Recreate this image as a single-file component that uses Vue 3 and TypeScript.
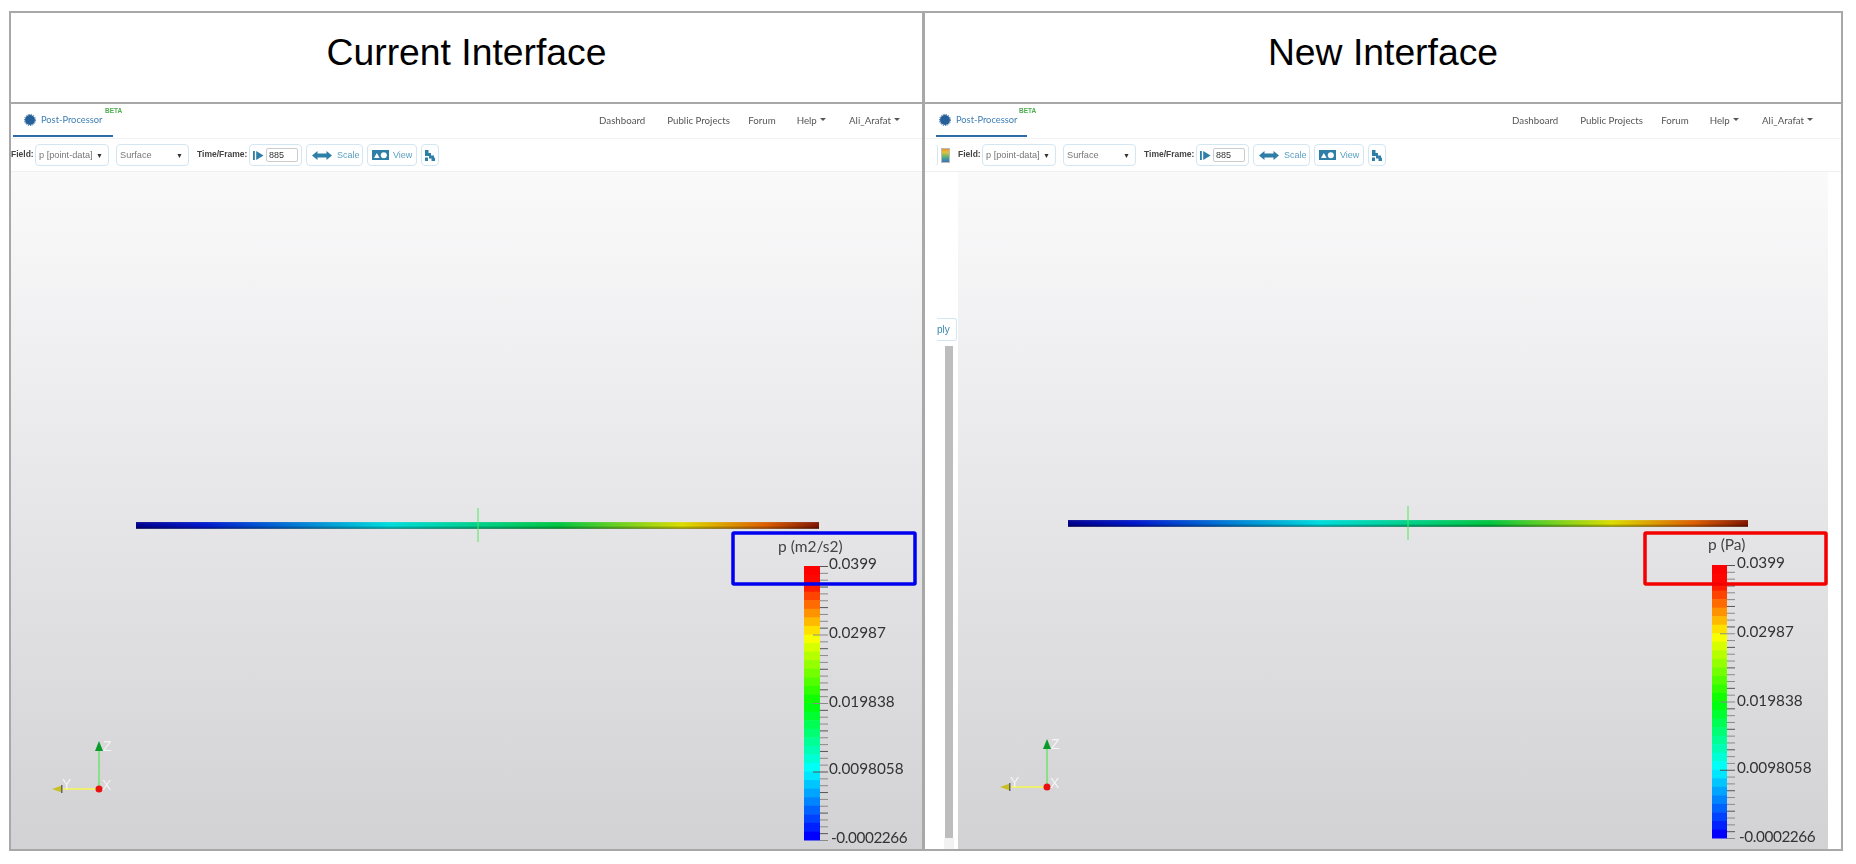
<script setup lang="ts">
interface Scene {
  pipe: [number, number, number]; tickX: number; tickY: number;
  barX: number; barW: number; barY: number; barH: number; labelX: number; labelDy: number;
  title: string; titleX: number; titleY: number;
  box: [number, number, number, number]; boxColor: string;
  ax: number; ay: number;
}
interface Panel {
  key: string; heading: string; strip: boolean; scene: Scene; gradId: string;
}
const panels: Panel[] = [
  { key: 'cur', heading: 'Current Interface', strip: false, gradId: 'l', scene: {
    pipe: [125, 808, 350], tickX: 467, tickY: 336, barX: 793, barW: 16, barY: 394, barH: 274, labelX: 818, labelDy: 0,
    title: 'p (m2/s2)', titleX: 767, titleY: 380, box: [722, 361, 182, 51], boxColor: '#0000f0', ax: 88, ay: 617 } },
  { key: 'new', heading: 'New Interface', strip: true, gradId: 'r', scene: {
    pipe: [110, 790, 348], tickX: 450, tickY: 334, barX: 754, barW: 15, barY: 393, barH: 273, labelX: 779, labelDy: -1,
    title: 'p (Pa)', titleX: 750, titleY: 378, box: [687, 361, 181, 51], boxColor: '#f40000', ax: 89, ay: 615 } },
];
const navItems = [
  { label: 'Dashboard', caret: false, cls: 'n1' },
  { label: 'Public Projects', caret: false, cls: 'n2' },
  { label: 'Forum', caret: false, cls: 'n3' },
  { label: 'Help', caret: true, cls: 'n4' },
  { label: 'Ali_Arafat', caret: true, cls: 'n5' },
];
const labels = [
  { t: '0.0399', y: 397, cls: '' }, { t: '0.02987', y: 466, cls: '' }, { t: '0.019838', y: 535, cls: '' },
  { t: '0.0098058', y: 602, cls: '' }, { t: '-0.0002266', y: 671, cls: 'neg' },
];
const barStops = [
  [0, [255, 0, 0]], [0.05, [255, 10, 0]], [0.25, [255, 255, 0]], [0.5, [0, 255, 0]], [0.75, [0, 255, 255]], [1, [0, 0, 255]],
] as [number, number[]][];
function colorAt(f: number): string {
  for (let i = 1; i < barStops.length; i++) {
    const [a, ca] = barStops[i - 1];
    const [b, cb] = barStops[i];
    if (f <= b) {
      const k = (f - a) / (b - a);
      const c = ca.map((v, j) => Math.round(v + (cb[j] - v) * k));
      return `rgb(${c[0]},${c[1]},${c[2]})`;
    }
  }
  return 'rgb(0,0,255)';
}
const bands = Array.from({ length: 32 }, (_, i) => ({ i, color: colorAt(i / 31) }));
const ticks = Array.from({ length: 41 }, (_, i) => i);
const axisText = 'Liberation Sans';
</script>

<template>
  <div class="sheet">
    <div class="table">
      <template v-for="p in panels" :key="p.key">
        <div class="head" :class="p.key">{{ p.heading }}</div>
      </template>
      <section v-for="p in panels" :key="p.key + 'b'" class="panel" :class="p.key">
        <div class="soft navbar">
          <div class="tab">
            <svg class="brand" viewBox="0 0 12 12" width="12" height="12">
              <circle cx="6" cy="6" r="5" fill="#26609a" />
              <circle cx="6" cy="6" r="5.500" fill="none" stroke="#26609a" stroke-width="1" stroke-dasharray="1.300 1.060" />
            </svg>
            <span class="brandname">Post-Processor</span>
            <span class="beta">BETA</span>
          </div>
          <nav class="nav">
            <span v-for="n in navItems" :key="n.label" class="navitem" :class="n.cls">
              {{ n.label }}<i v-if="n.caret" class="caret"></i>
            </span>
          </nav>
        </div>
        <div class="soft toolbar">
          <template v-if="p.strip">
            <span class="stub"></span>
            <span class="cmap"></span>
          </template>
          <label class="tlabel field">Field:</label>
          <div class="ctl sel s1"><span>p [point-data]</span><b>▼</b></div>
          <div class="ctl sel s2"><span>Surface</span><b>▼</b></div>
          <label class="tlabel time">Time/Frame:</label>
          <div class="ctl group">
            <svg viewBox="0 0 12 12" width="11" height="11"><path fill="#2e7fa8" d="M0 1h2v10H0zM3.500 1l8 5-8 5z" /></svg>
            <span class="num">885</span>
          </div>
          <div class="ctl btn scale">
            <svg viewBox="0 0 20 9" width="20" height="9"><path fill="#2e7fa8" d="M0 4.500L5.500 0v2.600h9V0L20 4.500 14.500 9V6.400h-9V9z" /></svg>
            <span>Scale</span>
          </div>
          <div class="ctl btn view">
            <svg viewBox="0 0 17 10" width="17" height="10"><rect width="17" height="10" fill="#2e7fa8" /><path fill="#fff" d="M2 8l2.800-5 2.800 5z" /><circle cx="11.800" cy="5.200" r="3" fill="#fff" /></svg>
            <span>View</span>
          </div>
          <div class="ctl tool">
            <svg viewBox="0 0 10 11" width="10" height="11"><path fill="#2e7fa8" d="M0 0h3.500v3H6v2.500H9V7.500l1 .5v3H6.500V8.500H4V6H0zM0 7.500h3V11H0z" /></svg>
          </div>
        </div>
        <div class="body">
          <aside v-if="p.strip" class="soft strip">
            <div class="apply">ply</div>
            <div class="scroll"></div>
            <div class="scrollend"></div>
          </aside>
          <div class="canvas">
            <svg class="scene" xmlns="http://www.w3.org/2000/svg">
              <defs>
                <linearGradient :id="'pipe' + p.gradId">
                  <stop offset="0" stop-color="#000090" /><stop offset=".1" stop-color="#0018d0" />
                  <stop offset=".37" stop-color="#00e0e0" /><stop offset=".62" stop-color="#00c840" />
                  <stop offset=".8" stop-color="#e0e000" /><stop offset=".92" stop-color="#e06000" />
                  <stop offset="1" stop-color="#801400" />
                </linearGradient>
                <linearGradient :id="'shade' + p.gradId" x2="0" y2="1">
                  <stop offset="0" stop-color="#fff" stop-opacity=".12" /><stop offset=".5" stop-color="#000" stop-opacity="0" />
                  <stop offset=".85" stop-color="#000" stop-opacity=".3" /><stop offset="1" stop-color="#999" stop-opacity=".7" />
                </linearGradient>
              </defs>
              <rect :x="p.scene.pipe[0]" :y="p.scene.pipe[2]" :width="p.scene.pipe[1] - p.scene.pipe[0]" height="7" :fill="`url(#pipe${p.gradId})`" />
              <rect :x="p.scene.pipe[0]" :y="p.scene.pipe[2]" :width="p.scene.pipe[1] - p.scene.pipe[0]" height="7" :fill="`url(#shade${p.gradId})`" />
              <line :x1="p.scene.tickX" :x2="p.scene.tickX" :y1="p.scene.tickY" :y2="p.scene.tickY + 34" stroke="#50e860" stroke-width="1" />

              <rect v-for="b in bands" :key="b.i" :x="p.scene.barX" :y="p.scene.barY + (b.i * p.scene.barH) / 32" :width="p.scene.barW" :height="p.scene.barH / 32 + 0.5" :fill="b.color" />
              <line v-for="t in ticks" :key="t" :x1="p.scene.barX + p.scene.barW - (t % 10 === 0 && t > 0 && t < 40 ? 7 : 0)" :x2="p.scene.barX + p.scene.barW + 8" :y1="p.scene.barY + 0.5 + (t * p.scene.barH) / 40" :y2="p.scene.barY + 0.5 + (t * p.scene.barH) / 40" :stroke="t % 3 === 0 ? '#555' : '#8a8a8a'" stroke-width="1" />
              <text class="cb title" :x="p.scene.titleX" :y="p.scene.titleY">{{ p.scene.title }}</text>
              <text v-for="(l, i) in labels" :key="l.t" class="cb" :class="l.cls" :x="p.scene.labelX + (i === 4 ? 2 : 0)" :y="l.y + p.scene.labelDy">{{ l.t }}</text>
              <rect :x="p.scene.box[0]" :y="p.scene.box[1]" :width="p.scene.box[2]" :height="p.scene.box[3]" rx="1" fill="none" :stroke="p.scene.boxColor" stroke-width="3.500" />

              <g :transform="`translate(${p.scene.ax} ${p.scene.ay})`">
                <line x1="0" y1="0" x2="0" y2="-39" stroke="#88e088" stroke-width="2" />
                <line x1="0" y1="0" x2="-36" y2="0" stroke="#f0f070" stroke-width="2" />
                <path d="M0 -48l4 10h-8z" fill="#0a9a2a" />
                <path d="M-47 0l10-3.500v7z" fill="#c8c020" />
                <rect x="-38" y="-4" width="1.500" height="8" fill="#666" />
                <circle cx="0" cy="0" r="3.500" fill="#e81010" />
                <text class="axl" x="4" y="-38" :font-family="axisText">Z</text>
                <text class="axl" x="-37" y="0" :font-family="axisText">Y</text>
                <text class="axl" x="3" y="1" :font-family="axisText">X</text>
              </g>
            </svg>
          </div>
          <div v-if="p.strip" class="gutter"></div>
        </div>
      </section>
    </div>
  </div>
</template>

<style>
html, body { margin: 0; background: #fff; }
</style>

<style scoped>
.sheet {
  width: 1856px;
  height: 864px;
  padding: 11px 0 0 9px;
  box-sizing: border-box;
  background: #fff;
  overflow: hidden;
}
.table {
  width: 1834px;
  height: 840px;
  box-sizing: border-box;
  border: 2px solid #a8a8a8;
  display: grid;
  grid-template-columns: 914px 916px;
  grid-template-rows: 91px 1fr;
  background: #fff;
}
.head {
  display: flex;
  align-items: center;
  justify-content: center;
  font: 37.300px "Liberation Sans", Arial, sans-serif;
  color: #000;
  border-bottom: 2px solid #a8a8a8;
  padding-bottom: 10px;
  box-sizing: border-box;
}
.head.cur { border-right: 3px solid #a8a8a8; }
.panel {
  display: flex;
  flex-direction: column;
  min-width: 0;
  min-height: 0;
}
.panel.cur { border-right: 3px solid #a8a8a8; }
.soft { filter: blur(0.35px); }
.navbar {
  height: 35px;
  flex: none;
  position: relative;
  display: flex;
  box-sizing: border-box;
  border-bottom: 1px solid #f2f2f2;
}
.tab {
  position: relative;
  box-sizing: border-box;
  height: 33px;
  border-bottom: 2px solid #2d6ca6;
  display: flex;
  align-items: center;
  gap: 5px;
}
.cur .tab { margin-left: 2px; width: 100px; padding: 0 0 0 11px; }
.new .tab { margin-left: 11px; width: 91px; padding: 0 0 0 3px; }
.brand { flex: none; }
.brandname {
  font: 9.300px Lato, sans-serif;
  color: #3f7fb5;
  white-space: nowrap;
}
.beta {
  position: absolute;
  top: 3px;
  font: 700 6.500px "Liberation Sans", sans-serif;
  color: #4cae4c;
}
.cur .beta { left: 92px; }
.new .beta { left: 83px; }
.nav {
  margin-left: auto;
  display: flex;
  align-items: center;
  height: 33px;
  padding-bottom: 2px;
  box-sizing: border-box;
  font: 9.700px Lato, sans-serif;
  color: #555;
}
.cur .nav { padding-right: 22px; }
.new .nav { padding-right: 28px; }
.navitem { white-space: nowrap; display: inline-flex; align-items: center; }
.n2 { margin-left: 22px; }
.n3 { margin-left: 18.400px; }
.n4 { margin-left: 21px; }
.n5 { margin-left: 23.300px; }
.caret {
  display: inline-block;
  margin-left: 3px;
  border-left: 3px solid transparent;
  border-right: 3px solid transparent;
  border-top: 3px solid #555;
}
.toolbar {
  height: 33px;
  flex: none;
  display: flex;
  align-items: center;
  box-sizing: border-box;
  border-bottom: 1px solid #f0f0f0;
  position: relative;
}
.tlabel {
  font: 700 8.500px "Liberation Sans", sans-serif;
  color: #444;
  white-space: nowrap;
  margin-top: -2px;
}
.field { width: 24px; }
.time { width: 52px; margin-left: 8px; }
.ctl {
  box-sizing: border-box;
  height: 22px;
  border: 1px solid #d4e6f1;
  border-radius: 4px;
  display: flex;
  align-items: center;
  flex: none;
  background: #fff;
}
.sel {
  justify-content: space-between;
  padding: 0 5px 0 3px;
  font: 9.200px "Liberation Sans", sans-serif;
  color: #777;
  white-space: nowrap;
}
.sel b { font-size: 7px; color: #333; font-weight: 400; }
.s1 { width: 74px; }
.s2 { width: 73px; margin-left: 7px; padding-left: 3px; }
.group { width: 53px; padding-left: 3px; gap: 2px; }
.num {
  box-sizing: border-box;
  width: 32px;
  height: 14px;
  padding-left: 2px;
  border: 1px solid #ccc;
  border-radius: 2px;
  font: 9px/12px "Liberation Sans", sans-serif;
  color: #333;
}
.btn {
  margin-left: 4px;
  padding-left: 5px;
  gap: 5px;
  font: 9px "Liberation Sans", sans-serif;
  color: #5a9fc0;
}
.scale { width: 57px; }
.view { width: 50px; padding-left: 4px; gap: 4px; }
.tool { width: 18px; margin-left: 4px; justify-content: center; }
.stub {
  box-sizing: border-box;
  width: 13px;
  height: 22px;
  border-right: 1px solid #d4e6f1;
  border-radius: 0 4px 4px 0;
}
.cmap {
  width: 9px;
  height: 15px;
  margin: 0 8px 0 3px;
  background: linear-gradient(#e8862a, #e6c23a 28%, #6db56a 55%, #3c8fb0 78%, #4a62a8);
  outline: 1px solid #bbb;
  outline-offset: -1px;
}
.body {
  flex: 1;
  min-height: 0;
  display: flex;
}
.strip {
  width: 33px;
  flex: none;
  display: flex;
  flex-direction: column;
  align-items: flex-start;
  padding: 146px 0 0 12px;
  box-sizing: border-box;
}
.apply {
  box-sizing: border-box;
  width: 20px;
  height: 23px;
  border: 1px solid #d4e6f1;
  border-left: 0;
  border-radius: 0 3px 3px 0;
  background: #fff;
  font: 10px/21px "Liberation Sans", sans-serif;
  color: #3a87ad;
}
.scroll {
  width: 8px;
  height: 492px;
  margin: 5px 0 0 8px;
  background: #bdbdbd;
}
.scrollend {
  flex: 1;
  width: 10px;
  margin-left: 7px;
  background: #f2f2f2;
}
.canvas {
  flex: 1;
  min-width: 0;
  position: relative;
  background: linear-gradient(#fafafb, #e6e5e7 50%, #d2d2d4);
}
.scene {
  position: absolute;
  inset: 0;
  width: 100%;
  height: 100%;
  overflow: visible;
  filter: blur(0.3px);
}
.cb {
  font: 15.300px Lato, sans-serif;
  fill: #333;
}
.cb.neg { letter-spacing: -0.4px; }
.cb.title { font-size: 15.500px; fill: #444; }
.axl {
  font-size: 14px;
  fill: #f4f4f4;
}
.gutter {
  width: 13px;
  flex: none;
}
</style>
